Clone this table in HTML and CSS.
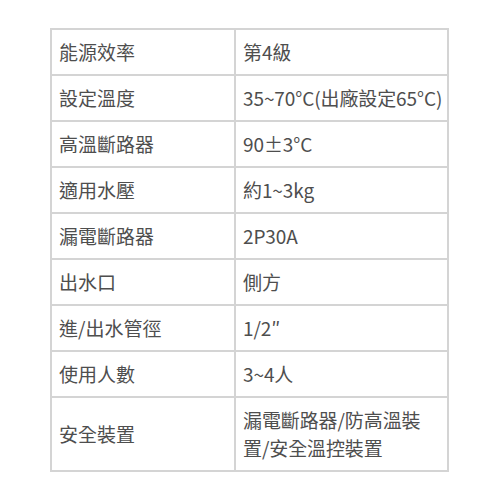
FILE: index.html
```
<!DOCTYPE html>
<html lang="zh-Hant">
<head>
<meta charset="utf-8">
<link rel="stylesheet" href="styles.css">
</head>
<body>
<div class="wrap">
<table class="spec">
  <tbody>
    <tr><td class="k">能源效率</td><td class="v">第4級</td></tr>
    <tr><td class="k">設定溫度</td><td class="v">35~70°C(出廠設定65°C)</td></tr>
    <tr><td class="k">高溫斷路器</td><td class="v">90±3°C</td></tr>
    <tr><td class="k">適用水壓</td><td class="v">約1~3kg</td></tr>
    <tr><td class="k">漏電斷路器</td><td class="v">2P30A</td></tr>
    <tr><td class="k">出水口</td><td class="v">側方</td></tr>
    <tr><td class="k">進/出水管徑</td><td class="v">1/2″</td></tr>
    <tr><td class="k">使用人數</td><td class="v">3~4人</td></tr>
    <tr><td class="k">安全裝置</td><td class="v">漏電斷路器/防高溫裝<br>置/安全溫控裝置</td></tr>
  </tbody>
</table>
</div>
</body>
</html>
```
FILE: styles.css
```
html, body {
  margin: 0;
  padding: 0;
  background: #ffffff;
}
.wrap {
  padding: 28px 51px 0 50px;
}
.spec {
  width: 399px;
  border-collapse: collapse;
  table-layout: fixed;
  font-family: "Noto Sans CJK TC", "Noto Sans", sans-serif;
  font-size: 19px;
  color: #4e4e4e;
}
.spec td {
  border: 2px solid #d4d4d4;
  padding: 8px 4px 8px 7px;
  line-height: 28px;
  vertical-align: middle;
  text-align: left;
  white-space: nowrap;
  overflow: hidden;
}
.spec .k {
  width: 171px;
}
.spec .v {
  letter-spacing: -0.1px;
}
```
